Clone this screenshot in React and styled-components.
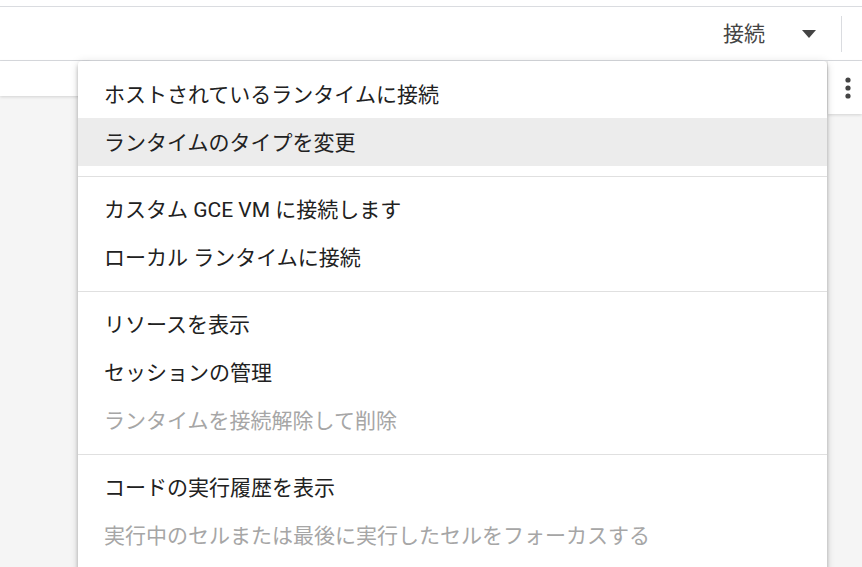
import React from 'react';
import styled, { createGlobalStyle } from 'styled-components';

const GlobalStyle = createGlobalStyle`
  html, body {
    margin: 0;
    padding: 0;
    background: #ffffff;
    overflow: hidden;
  }
  body {
    font-family: Roboto, "Noto Sans CJK JP", sans-serif;
  }
`;

const Page = styled.div`
  position: relative;
  width: 862px;
  height: 567px;
  display: flex;
  flex-direction: column;
  overflow: hidden;
`;

const TopStrip = styled.div`
  height: 6px;
  border-bottom: 1px solid #dadce0;
`;

const Toolbar = styled.div`
  height: 53px;
  border-bottom: 1px solid #dadce0;
  display: flex;
  align-items: center;
  justify-content: flex-end;
  padding-right: 20px;
`;

const ConnectLabel = styled.span`
  font-size: 21px;
  color: #444444;
  margin-right: 37px;
  margin-bottom: 4px;
`;

const Caret = styled.span`
  width: 0;
  height: 0;
  border-left: 7.5px solid transparent;
  border-right: 7.5px solid transparent;
  border-top: 8px solid #444444;
  margin-right: 25px;
`;

const Divider = styled.span`
  width: 1px;
  height: 36px;
  background: #dadce0;
`;

const Workspace = styled.div`
  flex: 1;
  background: #f5f5f5;
  display: flex;
  justify-content: space-between;
  align-items: flex-start;
`;

const CellBar = styled.div`
  width: 90px;
  height: 35px;
  background: #ffffff;
  box-shadow: 0 1px 3px rgba(0, 0, 0, 0.14);
`;

const SideBar = styled.div`
  width: 34px;
  height: 53px;
  background: #ffffff;
  box-shadow: 0 1px 3px rgba(0, 0, 0, 0.14);
  display: flex;
  align-items: center;
  justify-content: center;
  padding-left: 5px;
  box-sizing: border-box;
`;

const Menu = styled.div`
  position: absolute;
  left: 78px;
  top: 61px;
  width: 749px;
  bottom: -10px;
  background: #ffffff;
  border-radius: 4px;
  padding-top: 9px;
  box-shadow: 0 2px 4px -1px rgba(0, 0, 0, 0.2), 0 4px 5px 0 rgba(0, 0, 0, 0.14),
    0 1px 10px 0 rgba(0, 0, 0, 0.12);
`;

const Item = styled.div`
  height: 48px;
  box-sizing: border-box;
  display: flex;
  align-items: center;
  padding-left: 26px;
  padding-bottom: 3px;
  font-size: 21px;
  color: ${props => (props.disabled ? '#a6a6a6' : '#212121')};
  background: ${props => (props.active ? '#ececec' : 'transparent')};
  white-space: nowrap;
`;

const Separator = styled.div`
  height: 1px;
  background: #e0e0e0;
  margin: 10px 0 8px;
`;

function MoreIcon() {
  return (
    <svg width="6" height="22" viewBox="0 0 6 22">
      <circle cx="3" cy="3" r="2.6" fill="#444" />
      <circle cx="3" cy="11" r="2.6" fill="#444" />
      <circle cx="3" cy="19" r="2.6" fill="#444" />
    </svg>
  );
}

const groups = [
  [
    { label: 'ホストされているランタイムに接続' },
    { label: 'ランタイムのタイプを変更', active: true },
  ],
  [
    { label: 'カスタム GCE VM に接続します' },
    { label: 'ローカル ランタイムに接続' },
  ],
  [
    { label: 'リソースを表示' },
    { label: 'セッションの管理' },
    { label: 'ランタイムを接続解除して削除', disabled: true },
  ],
  [
    { label: 'コードの実行履歴を表示' },
    { label: '実行中のセルまたは最後に実行したセルをフォーカスする', disabled: true },
  ],
];

export default function App() {
  return (
    <>
      <GlobalStyle />
      <Page>
        <TopStrip />
        <Toolbar>
          <ConnectLabel>接続</ConnectLabel>
          <Caret />
          <Divider />
        </Toolbar>
        <Workspace>
          <CellBar />
          <SideBar>
            <MoreIcon />
          </SideBar>
        </Workspace>
        <Menu>
          {groups.map((group, gi) => (
            <React.Fragment key={gi}>
              {gi > 0 && <Separator />}
              {group.map(item => (
                <Item key={item.label} active={item.active} disabled={item.disabled}>
                  {item.label}
                </Item>
              ))}
            </React.Fragment>
          ))}
        </Menu>
      </Page>
    </>
  );
}
